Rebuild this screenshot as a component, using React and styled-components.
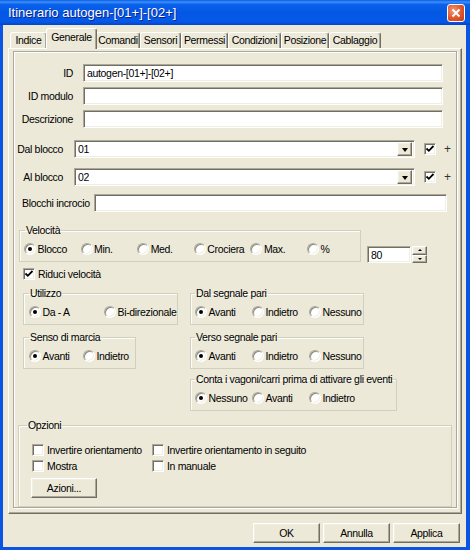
import React from 'react';
import styled, { createGlobalStyle, css } from 'styled-components';

const GlobalStyle = createGlobalStyle`
  html, body {
    margin: 0;
    padding: 0;
    background: #fff;
  }
  body {
    font-family: "Liberation Sans", Arial, sans-serif;
    font-size: 10.5px;
    letter-spacing: -0.33px;
    color: #000;
  }
`;

const sunken = css`
  box-sizing: border-box;
  background: #fff;
  border: 1px solid;
  border-color: #aca899 #fff #fff #aca899;
  box-shadow: inset 1px 1px 0 #716f64, inset -1px -1px 0 #f1efe2;
`;

const raised = css`
  box-sizing: border-box;
  background: #ece9d8;
  border: 1px solid;
  border-color: #fff #716f64 #716f64 #fff;
  box-shadow: inset -1px -1px 0 #aca899, inset 1px 1px 0 #f1efe2;
`;

const Window = styled.div`
  width: 470px;
  height: 550px;
  display: flex;
  flex-direction: column;
  background: #0a4fdc;
`;

const TitleBar = styled.div`
  height: 25px;
  flex: none;
  display: flex;
  align-items: center;
  justify-content: space-between;
  padding: 0 5px 0 8px;
  box-sizing: border-box;
  background: linear-gradient(#0a5ae6 0%, #3d8ffa 8%, #0a61ec 18%, #0357e3 50%, #0659e8 85%, #0246c8 100%);
`;

const TitleText = styled.span`
  font-size: 13px;
  letter-spacing: 0;
  color: #fff;
  text-shadow: 1px 1px 0 #0a1e8c;
`;

const CloseButton = styled.div`
  width: 18px;
  height: 18px;
  box-sizing: border-box;
  border: 1px solid #fff;
  border-radius: 3px;
  display: flex;
  align-items: center;
  justify-content: center;
  background: radial-gradient(circle at 35% 35%, #f19a7a 0%, #e0552a 55%, #c33b15 100%);
`;

const Frame = styled.div`
  flex: 1;
  display: flex;
  border-left: 3px solid #0b55e4;
  border-right: 4px solid #0b55e4;
  border-bottom: 4px solid #0b55e4;
  box-shadow: inset 1px 0 0 #0842c4;
`;

const Body = styled.div`
  flex: 1;
  display: flex;
  flex-direction: column;
  background: #ece9d8;
  padding: 3px 4px 4px 5px;
`;

const TabStrip = styled.div`
  height: 20px;
  flex: none;
  display: flex;
  align-items: flex-end;
  padding-left: 2px;
  position: relative;
  z-index: 1;
`;

const Tab = styled.div`
  width: ${p => p.$w}px;
  height: 16px;
  box-sizing: border-box;
  display: flex;
  align-items: center;
  justify-content: center;
  padding-bottom: 1px;
  border: 1px solid;
  border-bottom: none;
  border-color: #fff #716f64 transparent #fff;
  border-radius: 3px 3px 0 0;
  box-shadow: inset -1px 0 0 #aca899;
  background: #ece9d8;
  ${p => p.$active && css`
    height: 21px;
    width: ${p.$w + 2}px;
    margin: 0 -1px -1px;
    position: relative;
    z-index: 2;
    padding-bottom: 4px;
  `}
`;

const Panel = styled.div`
  flex: 1;
  display: flex;
  flex-direction: column;
  border: 1px solid;
  border-color: #fff #716f64 #716f64 #fff;
  box-shadow: inset -1px -1px 0 #aca899;
  padding: 2px 4px 5px 4px;
`;

const InnerFrame = styled.div`
  flex: 1;
  border: 1px solid #aca899;
  box-shadow: inset 1px 1px 0 #fff, 1px 1px 0 #fff;
`;

const FieldGrid = styled.div`
  display: grid;
  grid-template-columns: 59px 360px;
  column-gap: 10px;
  row-gap: 5px;
  align-items: center;
  margin-top: 12px;
`;

const RightLabel = styled.span`
  text-align: right;
  white-space: nowrap;
`;

const TextField = styled.div`
  ${sunken};
  height: ${p => p.$h || 18}px;
  width: ${p => (p.$w ? `${p.$w}px` : 'auto')};
  display: flex;
  align-items: center;
  padding-left: 3px;
  white-space: nowrap;
`;

const BlockRow = styled.div`
  display: flex;
  align-items: center;
  margin-top: ${p => p.$mt}px;
`;

const BlockLabel = styled.span`
  width: 49px;
  margin-right: 11px;
  text-align: right;
  white-space: nowrap;
`;

const Combo = styled.div`
  ${sunken};
  width: 341px;
  height: 18px;
  display: flex;
  align-items: center;
  justify-content: space-between;
  padding: 2px 2px 2px 3px;
`;

const DropButton = styled.div`
  ${raised};
  width: 15px;
  height: 14px;
  display: flex;
  align-items: center;
  justify-content: center;
  &::after {
    content: '';
    border-left: 3.5px solid transparent;
    border-right: 3.5px solid transparent;
    border-top: 4px solid #000;
    margin-top: 1px;
  }
`;

const BlockCheck = styled.span`
  margin-left: 9px;
`;

const Plus = styled.span`
  margin-left: 8px;
  font-size: 12px;
  color: #333;
`;

const IncrocioRow = styled.div`
  display: flex;
  align-items: center;
  margin: 8px 0 0 8px;
`;

const IncrocioLabel = styled.span`
  width: 72px;
  white-space: nowrap;
`;

const VelocityRow = styled.div`
  display: flex;
  align-items: flex-end;
  margin: 12px 0 0 5px;
`;

const Group = styled.fieldset`
  margin: ${p => p.$mt || 0}px 0 0 0;
  padding: 0;
  min-width: 0;
  width: ${p => p.$w}px;
  box-sizing: border-box;
  border: 1px solid #d0d0bf;
  box-shadow: inset 1px 1px 0 #fdfdfb;
`;

const Legend = styled.legend`
  padding: 0 1px;
  margin-left: ${p => p.$offset || 5}px;
  line-height: 12px;
`;

const GroupContent = styled.div`
  display: grid;
  grid-template-columns: ${p => p.$cols};
  row-gap: ${p => p.$rowGap || 0}px;
  padding: ${p => p.$pt || 6}px 0 ${p => p.$pb || 6}px ${p => p.$pl}px;
`;

const Option = styled.label`
  display: flex;
  align-items: center;
  gap: 1.5px;
  height: 13px;
  white-space: nowrap;
`;

const CheckOption = styled(Option)`
  gap: 3px;
`;

const RadioMark = styled.span`
  position: relative;
  flex: none;
  width: 12px;
  height: 12px;
  box-sizing: border-box;
  border-radius: 50%;
  background: #fff;
  border: 1px solid;
  border-color: #aca899 #fff #fff #aca899;
  box-shadow: inset 1px 1px 0 #8e8b7d, inset -1px -1px 0 #f1efe2;
  &::after {
    content: '';
    display: ${p => (p.$checked ? 'block' : 'none')};
    position: absolute;
    left: 3px;
    top: 3px;
    width: 4px;
    height: 4px;
    border-radius: 50%;
    background: #000;
  }
`;

const CheckMark = styled.span`
  ${sunken};
  flex: none;
  width: 12px;
  height: 12px;
  display: flex;
  align-items: center;
  justify-content: center;
`;

const Spin = styled.div`
  display: flex;
  margin: 0 0 -1px 6px;
`;

const SpinButtons = styled.div`
  display: flex;
  flex-direction: column;
  margin-left: 1px;
`;

const SpinButton = styled.div`
  ${raised};
  width: 15px;
  height: 8.5px;
  display: flex;
  align-items: center;
  justify-content: center;
  &::after {
    content: '';
    border-left: 2px solid transparent;
    border-right: 2px solid transparent;
    ${p => (p.$up ? 'border-bottom: 2px solid #000;' : 'border-top: 2px solid #000;')}
  }
`;

const RiduciRow = styled.div`
  margin: 5px 0 0 9px;
`;

const TwoCol = styled.div`
  display: grid;
  grid-template-columns: 167px auto;
  row-gap: 6px;
  align-items: start;
  margin: 7px 0 0 9px;
`;

const OptionsGroup = styled(Group)`
  margin: 8px 0 0 4px;
`;

const PushButton = styled.div`
  ${raised};
  width: ${p => p.$w}px;
  height: 20px;
  display: flex;
  align-items: center;
  justify-content: center;
`;

const ActionButton = styled(PushButton)`
  margin: 3px 0 0 -1px;
`;

const ButtonRow = styled.div`
  flex: none;
  display: flex;
  justify-content: flex-end;
  gap: 3px;
  margin: 9px 2px 0 0;
`;

const Radio = ({ label, checked }) => (
  <Option>
    <RadioMark $checked={checked} />
    <span>{label}</span>
  </Option>
);

const Check = ({ label, checked }) => (
  <CheckOption>
    <CheckMark>
      {checked && (
        <svg width="10" height="10" viewBox="0 0 10 10">
          <polyline points="1.5,4.5 3.8,6.8 8.5,2" fill="none" stroke="#000" strokeWidth="1.8" />
        </svg>
      )}
    </CheckMark>
    {label && <span>{label}</span>}
  </CheckOption>
);

const tabs = [
  ['Indice', 37],
  ['Generale', 49],
  ['Comandi', 44],
  ['Sensori', 41],
  ['Permessi', 47],
  ['Condizioni', 53],
  ['Posizione', 48],
  ['Cablaggio', 52],
];

export default function App() {
  return (
    <>
      <GlobalStyle />
      <Window>
        <TitleBar>
          <TitleText>Itinerario autogen-[01+]-[02+]</TitleText>
          <CloseButton>
            <svg width="10" height="10" viewBox="0 0 10 10">
              <path d="M1.5 1.5 L8.5 8.5 M8.5 1.5 L1.5 8.5" stroke="#fff" strokeWidth="1.9" />
            </svg>
          </CloseButton>
        </TitleBar>
        <Frame>
          <Body>
            <TabStrip>
              {tabs.map(([name, w]) => (
                <Tab key={name} $w={w} $active={name === 'Generale'}>{name}</Tab>
              ))}
            </TabStrip>
            <Panel>
              <InnerFrame>
                <FieldGrid>
                  <RightLabel>ID</RightLabel>
                  <TextField>autogen-[01+]-[02+]</TextField>
                  <RightLabel>ID modulo</RightLabel>
                  <TextField />
                  <RightLabel>Descrizione</RightLabel>
                  <TextField />
                </FieldGrid>

                <BlockRow $mt={12}>
                  <BlockLabel>Dal blocco</BlockLabel>
                  <Combo>01<DropButton /></Combo>
                  <BlockCheck><Check checked /></BlockCheck>
                  <Plus>+</Plus>
                </BlockRow>
                <BlockRow $mt={10}>
                  <BlockLabel>Al blocco</BlockLabel>
                  <Combo>02<DropButton /></Combo>
                  <BlockCheck><Check checked /></BlockCheck>
                  <Plus>+</Plus>
                </BlockRow>

                <IncrocioRow>
                  <IncrocioLabel>Blocchi incrocio</IncrocioLabel>
                  <TextField $w={353} />
                </IncrocioRow>

                <VelocityRow>
                  <Group $w={342}>
                    <Legend>Velocità</Legend>
                    <GroupContent $cols="repeat(5, 56.6px) auto" $pl={4}>
                      <Radio label="Blocco" checked />
                      <Radio label="Min." />
                      <Radio label="Med." />
                      <Radio label="Crociera" />
                      <Radio label="Max." />
                      <Radio label="%" />
                    </GroupContent>
                  </Group>
                  <Spin>
                    <TextField $w={44} $h={17}>80</TextField>
                    <SpinButtons>
                      <SpinButton $up />
                      <SpinButton />
                    </SpinButtons>
                  </Spin>
                </VelocityRow>

                <RiduciRow>
                  <Check label="Riduci velocità" checked />
                </RiduciRow>

                <TwoCol>
                  <Group $w={155}>
                    <Legend>Utilizzo</Legend>
                    <GroupContent $cols="75px auto" $pl={5}>
                      <Radio label="Da - A" checked />
                      <Radio label="Bi-direzionale" />
                    </GroupContent>
                  </Group>
                  <Group $w={174}>
                    <Legend $offset={4}>Dal segnale pari</Legend>
                    <GroupContent $cols="57px 57px auto" $pl={4}>
                      <Radio label="Avanti" checked />
                      <Radio label="Indietro" />
                      <Radio label="Nessuno" />
                    </GroupContent>
                  </Group>
                  <Group $w={113}>
                    <Legend>Senso di marcia</Legend>
                    <GroupContent $cols="54px auto" $pl={5}>
                      <Radio label="Avanti" checked />
                      <Radio label="Indietro" />
                    </GroupContent>
                  </Group>
                  <Group $w={174}>
                    <Legend $offset={4}>Verso segnale pari</Legend>
                    <GroupContent $cols="57px 57px auto" $pl={4}>
                      <Radio label="Avanti" checked />
                      <Radio label="Indietro" />
                      <Radio label="Nessuno" />
                    </GroupContent>
                  </Group>
                  <span />
                  <Group $w={207} $mt={-2}>
                    <Legend $offset={4}>Conta i vagoni/carri prima di attivare gli eventi</Legend>
                    <GroupContent $cols="57px 57px auto" $pl={4}>
                      <Radio label="Nessuno" checked />
                      <Radio label="Avanti" />
                      <Radio label="Indietro" />
                    </GroupContent>
                  </Group>
                </TwoCol>

                <OptionsGroup $w={434}>
                  <Legend $offset={8}>Opzioni</Legend>
                  <GroupContent $cols="120px auto" $rowGap={3} $pt={12} $pb={8} $pl={13}>
                    <Check label="Invertire orientamento" />
                    <Check label="Invertire orientamento in seguito" />
                    <Check label="Mostra" />
                    <Check label="In manuale" />
                    <ActionButton $w={66}>Azioni...</ActionButton>
                  </GroupContent>
                </OptionsGroup>
              </InnerFrame>
            </Panel>
            <ButtonRow>
              <PushButton $w={67}>OK</PushButton>
              <PushButton $w={67}>Annulla</PushButton>
              <PushButton $w={67}>Applica</PushButton>
            </ButtonRow>
          </Body>
        </Frame>
      </Window>
    </>
  );
}
